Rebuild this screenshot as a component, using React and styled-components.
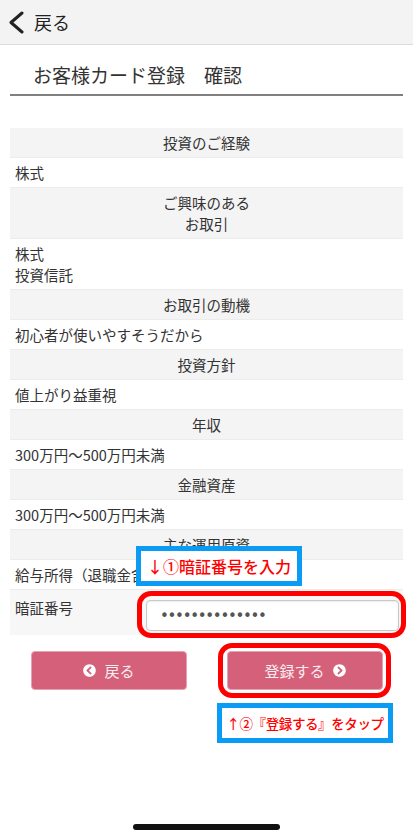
import React from 'react';
import styled, { createGlobalStyle } from 'styled-components';
import { FaChevronCircleLeft, FaChevronCircleRight } from 'react-icons/fa';

const GlobalStyle = createGlobalStyle`
  html, body {
    margin: 0;
    padding: 0;
    background: #fff;
  }
  body {
    font-family: "Noto Sans CJK JP", "Noto Sans", sans-serif;
    color: #333;
  }
`;

const Page = styled.div`
  position: relative;
  min-height: 838px;
  overflow: hidden;
`;

const TopBar = styled.header`
  display: flex;
  align-items: center;
  gap: 10px;
  height: 44px;
  padding-left: 8px;
  background: #f3f3f3;
  border-bottom: 1px solid #dcdcdc;
  font-size: 18px;
  color: #222;
`;

const Title = styled.h1`
  margin: 0 10px;
  padding: 16px 0 5px 23px;
  font-size: 19px;
  font-weight: 400;
  line-height: 28px;
  color: #333;
  border-bottom: 2px solid #808080;
`;

const Table = styled.div`
  margin: 32px 10px 0;
`;

const Cell = styled.div`
  padding: 4px 5px;
  font-size: 14.5px;
  line-height: 21px;
  border-bottom: 1px solid #ececec;
  background: ${(p) => (p.$head ? '#f4f4f4' : '#fff')};
  text-align: ${(p) => (p.$head ? 'center' : 'left')};
  white-space: pre-line;
`;

const PasswordRow = styled.div`
  position: relative;
  display: flex;
  align-items: flex-start;
  padding: 10px 4px 4px 5px;
  background: #f7f7f7;
`;

const Label = styled.div`
  width: 131px;
  flex-shrink: 0;
  font-size: 14.5px;
  line-height: 21px;
  margin-top: -3px;
`;

const InputWrap = styled.div`
  position: relative;
  flex: 1;
`;

const Input = styled.div`
  display: flex;
  align-items: center;
  height: 31px;
  box-sizing: border-box;
  padding-left: 13px;
  background: #fff;
  border: 1px solid #c8c8c8;
  border-radius: 4px;
  box-shadow: inset 0 1px 2px rgba(0, 0, 0, 0.08);
  font-family: "DejaVu Sans", sans-serif;
  font-size: 15px;
  letter-spacing: -1.3px;
  color: #555;
`;

const Ring = styled.div`
  position: absolute;
  top: -9px;
  left: -9px;
  right: -7px;
  bottom: -7px;
  border: 5px solid #ff0000;
  border-radius: 14px;
  pointer-events: none;
`;

const Callout = styled.div`
  box-sizing: border-box;
  display: flex;
  align-items: center;
  justify-content: center;
  background: #fff;
  border: 5px solid #0a9cf5;
  color: #ff0000;
  font-weight: 500;
  white-space: nowrap;
`;

const TopCallout = styled(Callout)`
  position: absolute;
  left: 126px;
  bottom: calc(100% + 4px);
  width: 166px;
  height: 40px;
  font-size: 16px;
`;

const ButtonRow = styled.div`
  display: flex;
  gap: 40px;
  padding: 16px 30px 0 31px;
`;

const ButtonWrap = styled.div`
  position: relative;
  flex: 1;
`;

const Button = styled.button`
  display: flex;
  align-items: center;
  justify-content: center;
  gap: 8px;
  width: 100%;
  height: 39px;
  padding: 0;
  background: #d4607a;
  border: 1px solid #e7a1b1;
  border-radius: 4px;
  color: #fbecf0;
  font-family: inherit;
  font-size: 15px;
  svg {
    width: 13px;
    height: 13px;
    color: #fff;
  }
`;

const ButtonRing = styled(Ring)`
  top: -8px;
  left: -9px;
  right: -8px;
  bottom: -8px;
`;

const NoteRow = styled.div`
  display: flex;
  justify-content: flex-end;
  padding: 13px 20px 0 0;
`;

const BottomCallout = styled(Callout)`
  width: 176px;
  height: 40px;
  font-size: 13.5px;
  letter-spacing: -0.4px;
`;

const HomeBar = styled.div`
  position: absolute;
  left: 133px;
  bottom: 8px;
  width: 147px;
  height: 6px;
  border-radius: 3px;
  background: #111;
`;

const rows = [
  { head: '投資のご経験', value: '株式' },
  { head: 'ご興味のある\nお取引', value: '株式\n投資信託' },
  { head: 'お取引の動機', value: '初心者が使いやすそうだから' },
  { head: '投資方針', value: '値上がり益重視' },
  { head: '年収', value: '300万円〜500万円未満' },
  { head: '金融資産', value: '300万円〜500万円未満' },
  { head: '主な運用原資', value: '給与所得（退職金含む）' },
];

const BackIcon = () => (
  <svg width="16" height="24" viewBox="0 0 16 24" fill="none">
    <path d="M14 3 L3 12.5 L14 22" stroke="#222" strokeWidth="3" strokeLinecap="round" strokeLinejoin="round" />
  </svg>
);

export default function App() {
  return (
    <Page>
      <GlobalStyle />
      <TopBar>
        <BackIcon />
        <span>戻る</span>
      </TopBar>
      <Title>お客様カード登録　確認</Title>
      <Table>
        {rows.map((r) => (
          <React.Fragment key={r.head}>
            <Cell $head>{r.head}</Cell>
            <Cell>{r.value}</Cell>
          </React.Fragment>
        ))}
        <PasswordRow>
          <TopCallout>↓①暗証番号を入力</TopCallout>
          <Label>暗証番号</Label>
          <InputWrap>
            <Input>••••••••••••••</Input>
            <Ring />
          </InputWrap>
        </PasswordRow>
      </Table>
      <ButtonRow>
        <ButtonWrap>
          <Button>
            <FaChevronCircleLeft />
            戻る
          </Button>
        </ButtonWrap>
        <ButtonWrap>
          <Button>
            登録する
            <FaChevronCircleRight />
          </Button>
          <ButtonRing />
        </ButtonWrap>
      </ButtonRow>
      <NoteRow>
        <BottomCallout>↑②『登録する』をタップ</BottomCallout>
      </NoteRow>
      <HomeBar />
    </Page>
  );
}
